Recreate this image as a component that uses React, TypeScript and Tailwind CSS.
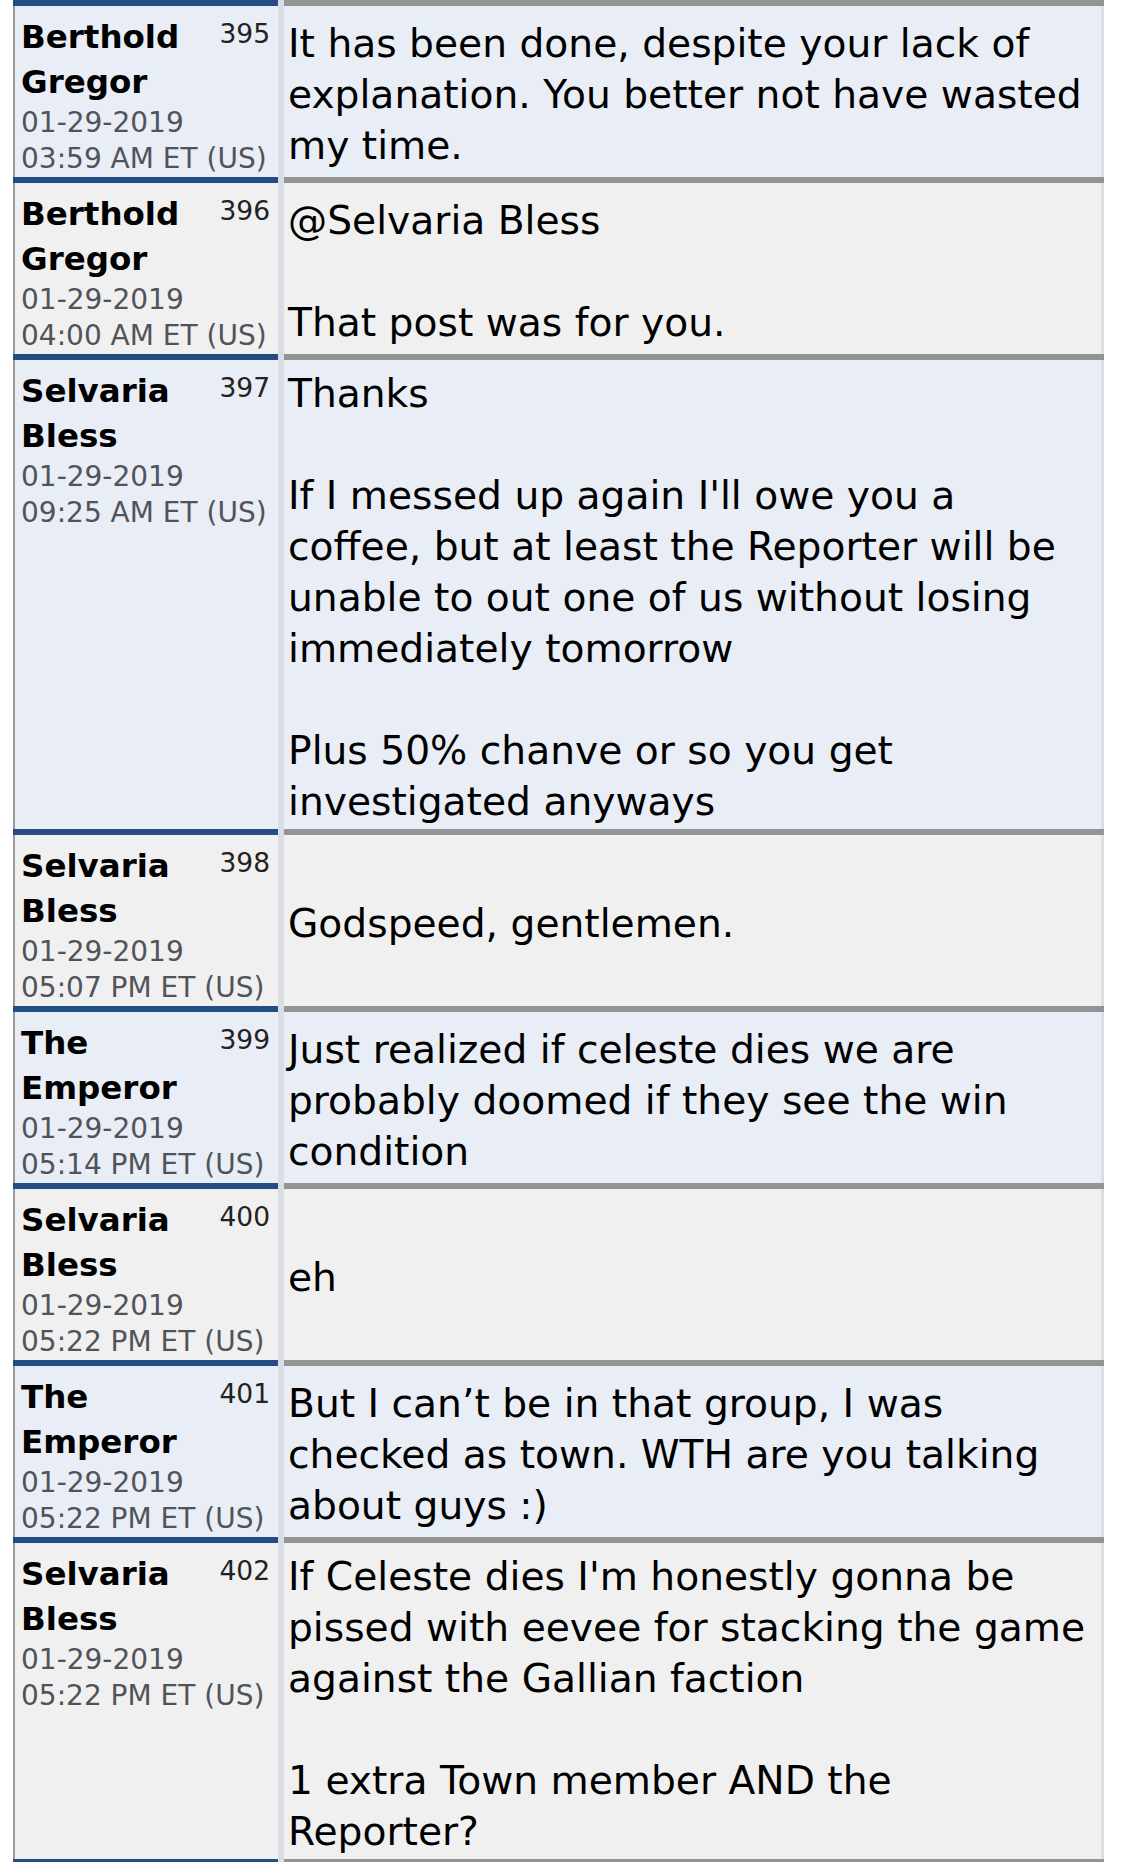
import React from "react";

type Post = {
  name: [string, string];
  num: string;
  date: string;
  time: string;
  lines: string[];
};

const posts: Post[] = [
  {
    name: ["Berthold", "Gregor"],
    num: "395",
    date: "01-29-2019",
    time: "03:59 AM ET (US)",
    lines: [
      "It has been done, despite your lack of",
      "explanation. You better not have wasted",
      "my time.",
    ],
  },
  {
    name: ["Berthold", "Gregor"],
    num: "396",
    date: "01-29-2019",
    time: "04:00 AM ET (US)",
    lines: ["@Selvaria Bless", "", "That post was for you."],
  },
  {
    name: ["Selvaria", "Bless"],
    num: "397",
    date: "01-29-2019",
    time: "09:25 AM ET (US)",
    lines: [
      "Thanks",
      "",
      "If I messed up again I'll owe you a",
      "coffee, but at least the Reporter will be",
      "unable to out one of us without losing",
      "immediately tomorrow",
      "",
      "Plus 50% chanve or so you get",
      "investigated anyways",
    ],
  },
  {
    name: ["Selvaria", "Bless"],
    num: "398",
    date: "01-29-2019",
    time: "05:07 PM ET (US)",
    lines: ["Godspeed, gentlemen."],
  },
  {
    name: ["The", "Emperor"],
    num: "399",
    date: "01-29-2019",
    time: "05:14 PM ET (US)",
    lines: [
      "Just realized if celeste dies we are",
      "probably doomed if they see the win",
      "condition",
    ],
  },
  {
    name: ["Selvaria", "Bless"],
    num: "400",
    date: "01-29-2019",
    time: "05:22 PM ET (US)",
    lines: ["eh"],
  },
  {
    name: ["The", "Emperor"],
    num: "401",
    date: "01-29-2019",
    time: "05:22 PM ET (US)",
    lines: [
      "But I can\u2019t be in that group, I was",
      "checked as town. WTH are you talking",
      "about guys :)",
    ],
  },
  {
    name: ["Selvaria", "Bless"],
    num: "402",
    date: "01-29-2019",
    time: "05:22 PM ET (US)",
    lines: [
      "If Celeste dies I'm honestly gonna be",
      "pissed with eevee for stacking the game",
      "against the Gallian faction",
      "",
      "1 extra Town member AND the",
      "Reporter?",
    ],
  },
];

function Row({ p, odd }: { p: Post; odd: boolean }) {
  const bg = odd ? "bg-[#e9edf5]" : "bg-[#f0f0f0]";
  return (
    <div className="flex">
      <div className="flex w-[265px] shrink-0 flex-col">
        <div className="h-[6px] bg-[#244d84]" />
        <div className={`flex-1 border-l-2 border-[#9b9b9b] ${bg} pl-[6px] pr-[8px] pt-[9px] pb-[1px]`}>
          <div className="flex items-start justify-between">
            <div className="text-[32.5px] font-bold leading-[45px] text-black">{p.name[0]}</div>
            <div className="text-[26.5px] leading-[38px] text-[#222222]">{p.num}</div>
          </div>
          <div className="text-[32.5px] font-bold leading-[45px] text-black">{p.name[1]}</div>
          <div className="text-[28px] leading-[35.5px] text-[#50545a] whitespace-nowrap">{p.date}</div>
          <div className="text-[28px] leading-[35.5px] text-[#50545a] whitespace-nowrap">{p.time}</div>
        </div>
      </div>
      <div className="w-[6px] shrink-0 bg-[#d9dde4]" />
      <div className="flex flex-1 flex-col">
        <div className="h-[6px] bg-[#939496]" />
        <div className={`flex flex-1 flex-col justify-center border-r-[3px] border-[#dbdee3] ${bg} pl-[4px] pt-[8px] pb-[2px]`}>
          {p.lines.map((l, i) => (
            <div key={i} className="h-[51px] whitespace-nowrap text-[39.2px] leading-[51px] text-black">
              {l}
            </div>
          ))}
        </div>
      </div>
    </div>
  );
}

export default function App() {
  return (
    <div
      className="h-[1862px] w-[1124px] overflow-hidden bg-white"
      style={{ fontFamily: '"DejaVu Sans", Verdana, sans-serif' }}
    >
      <div className="ml-[13px] w-[1091px]">
        {posts.map((p, i) => (
          <Row key={p.num} p={p} odd={i % 2 === 0} />
        ))}
        <div className="flex">
          <div className="h-[6px] w-[265px] shrink-0 bg-[#244d84]" />
          <div className="h-[6px] w-[6px] shrink-0 bg-[#d9dde4]" />
          <div className="h-[6px] flex-1 bg-[#939496]" />
        </div>
      </div>
    </div>
  );
}
